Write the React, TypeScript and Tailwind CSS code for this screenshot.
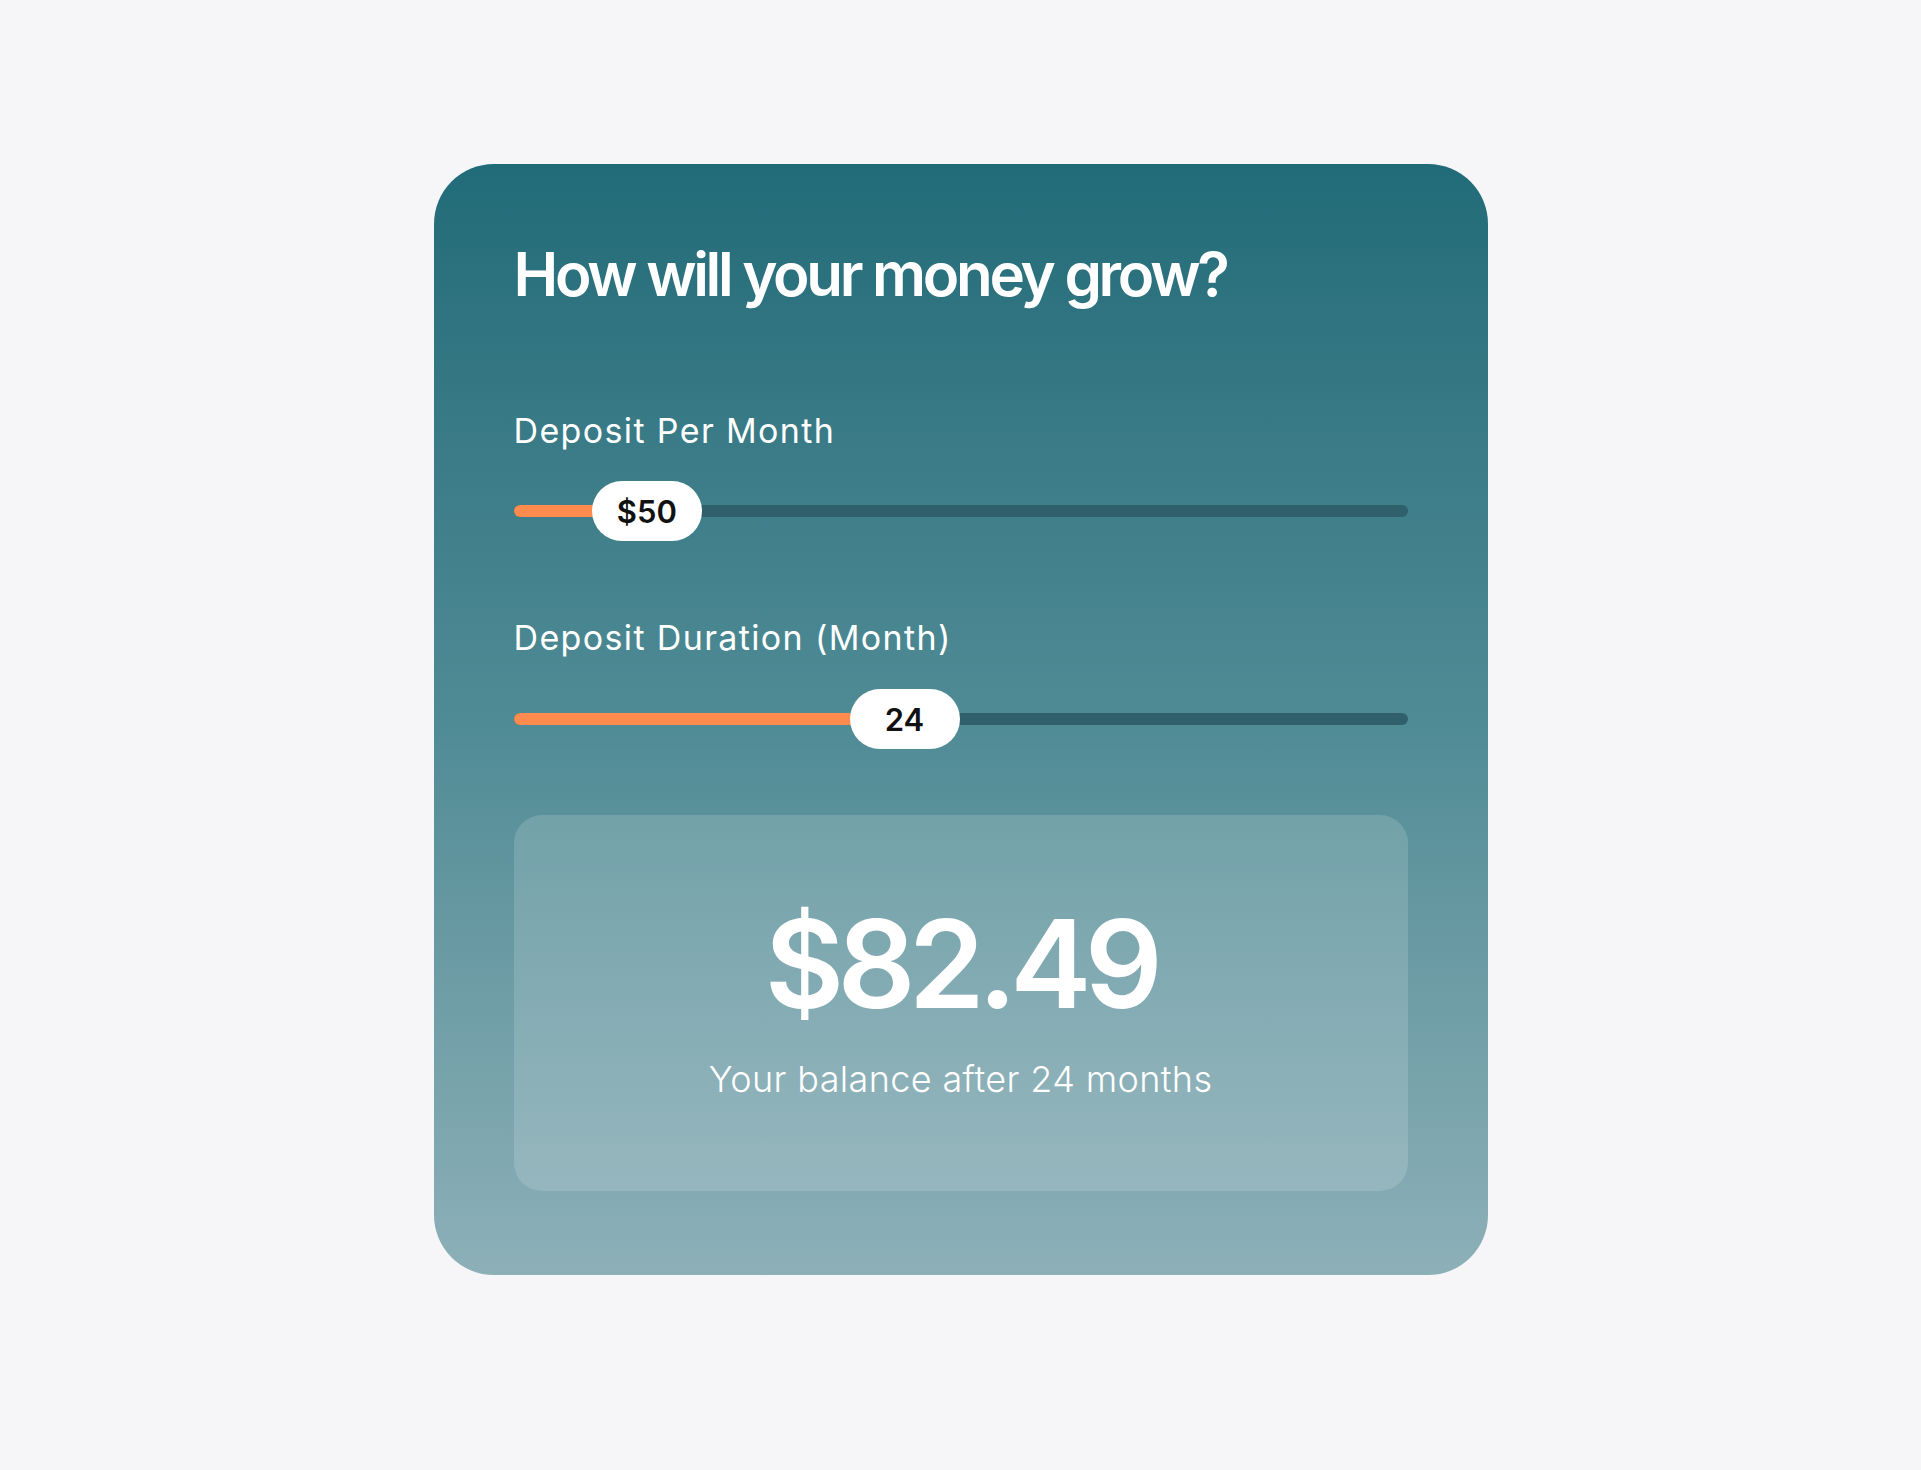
import React, { useState } from 'react';

interface SliderProps {
  value: number;
  min: number;
  max: number;
  label: string;
}

const Slider: React.FC<SliderProps> = ({ value, min, max, label }) => {
  const pct = (value - min) / (max - min);

  return (
    <div className="relative h-[60px] w-full flex items-center">
      <div className="h-3 w-full rounded-full bg-[#30606b]">
        <div
          className="h-3 rounded-full bg-[#ff8b4e]"
          style={{ width: `calc(${pct} * (100% - 110px) + 20px)` }}
        />
      </div>
      <div
        className="absolute top-0 h-[60px] w-[110px] rounded-full bg-white flex items-center justify-center text-[31px] font-semibold text-[#111] leading-none"
        style={{ left: `calc(${pct} * (100% - 110px))` }}
      >
        {label}
      </div>
    </div>
  );
};

export default function App() {
  const [deposit] = useState(50);
  const [months] = useState(24);

  return (
    <div className="min-h-screen bg-[#f6f5f8] flex justify-center pt-[164px] font-['Inter',sans-serif]">
      <div className="w-[1054px] h-[1111px] rounded-[60px] bg-linear-to-b from-[#216b78] via-[#4f8b95] to-[#8db0b8] px-20 pt-20 pb-[83px] flex flex-col">
        <h1 className="text-[60px] leading-none font-semibold tracking-[-0.055em] text-white">
          How will your money grow?
        </h1>

        <p className="mt-[110px] text-[34px] leading-none text-white tracking-[0.04em]">
          Deposit Per Month
        </p>
        <div className="mt-[33px]">
          <Slider value={deposit} min={0} max={500} label={`$${deposit}`} />
        </div>

        <p className="mt-[80px] text-[34px] leading-none text-white tracking-[0.04em]">
          Deposit Duration (Month)
        </p>
        <div className="mt-[34px]">
          <Slider value={months} min={6} max={48} label={`${months}`} />
        </div>

        <div className="mt-[66px] h-[376px] rounded-[28px] bg-white/15 flex flex-col items-center pt-[88px]">
          <div className="text-[122px] leading-none font-semibold text-white tracking-[-0.055em]">
            $82.49
          </div>
          <div className="mt-[36px] text-[36px] leading-none font-light text-white tracking-[0.01em]">
            Your balance after {months} months
          </div>
        </div>
      </div>
    </div>
  );
}
